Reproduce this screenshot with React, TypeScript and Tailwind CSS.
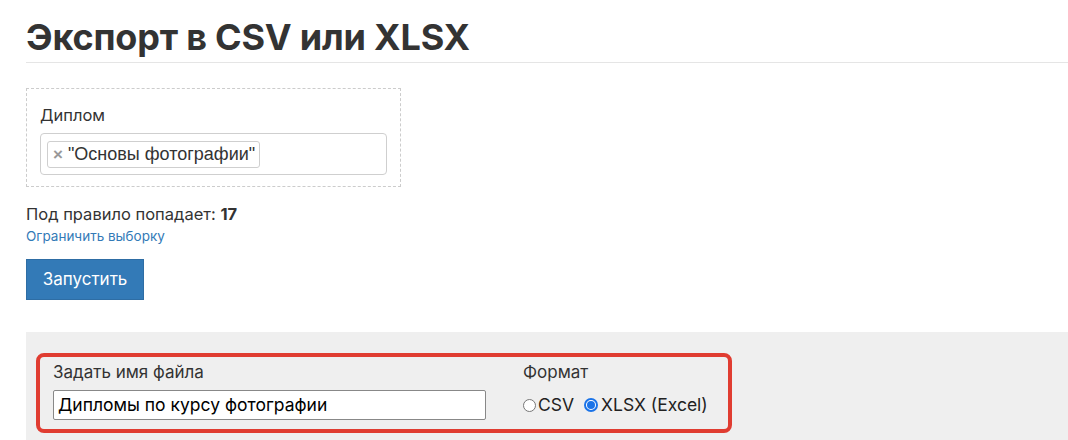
import React from "react";

export default function App() {
  return (
    <div className="w-[1068px] h-[440px] overflow-hidden bg-white text-[#333]" style={{ fontFamily: "Inter, 'Noto Sans', sans-serif" }}>
      <div className="pl-[26px]">
        <h1 className="text-[36px] font-bold leading-[44px] pt-[15px] pb-[3px] border-b border-[#e5e5e5] text-[#333] tracking-[-0.2px]">
          Экспорт в CSV или XLSX
        </h1>
        <div className="mt-[25px] w-[375px] h-[99px] border border-dashed border-[#cccccc] px-[13px] pt-[15px]">
          <div className="text-[16.5px] leading-[22px] text-[#333]">Диплом</div>
          <div className="mt-[7px] h-[42px] border border-[#cfcfcf] rounded-[4px] flex items-center px-[6px]">
            <div className="h-[27px] border border-[#cfcfcf] rounded-[3px] flex items-center pl-[5px] pr-[4px] gap-[5px] text-[18px] text-[#333]" style={{ fontFamily: "'Liberation Sans', Arial, sans-serif" }}>
              <span className="text-[#999] text-[17px] font-bold leading-none">×</span>
              <span>"Основы фотографии"</span>
            </div>
          </div>
        </div>
        <div className="mt-[16px] text-[16.5px] leading-[22px]">Под правило попадает: <b>17</b></div>
        <div className="mt-[2px] text-[13.5px] leading-[18px] text-[#337ab7]">Ограничить выборку</div>
        <button className="mt-[14px] w-[118px] h-[41px] bg-[#337ab7] border border-[#2e6da4] text-white text-[17px]">Запустить</button>
        <div className="mt-[32px] bg-[#efefef] h-[120px] pl-[10px] pt-[21px]">
          <div className="w-[696px] h-[80px] border-[4px] border-[#e03c31] rounded-[8px] flex pl-[13px] pt-[4px]">
            <div className="w-[433px]">
              <div className="text-[17px] leading-[22px]">Задать имя файла</div>
              <div className="mt-[7px] h-[30px] bg-white border border-[#888] rounded-[2px] flex items-center px-[4px] text-[17.5px] text-black">
                Дипломы по курсу фотографии
              </div>
            </div>
            <div className="ml-[37px]">
              <div className="text-[17px] leading-[22px]">Формат</div>
              <div className="mt-[7px] h-[30px] flex items-center text-[17.5px] text-[#222]">
                <span className="w-[13px] h-[13px] rounded-full border border-[#777] bg-white mr-[2px]"></span>
                <span>CSV</span>
                <span className="ml-[10px] w-[14px] h-[14px] rounded-full border-[2px] border-[#1a73e8] bg-white flex items-center justify-center mr-[3px]">
                  <span className="w-[8px] h-[8px] rounded-full bg-[#1a73e8]"></span>
                </span>
                <span>XLSX (Excel)</span>
              </div>
            </div>
          </div>
        </div>
      </div>
    </div>
  );
}
